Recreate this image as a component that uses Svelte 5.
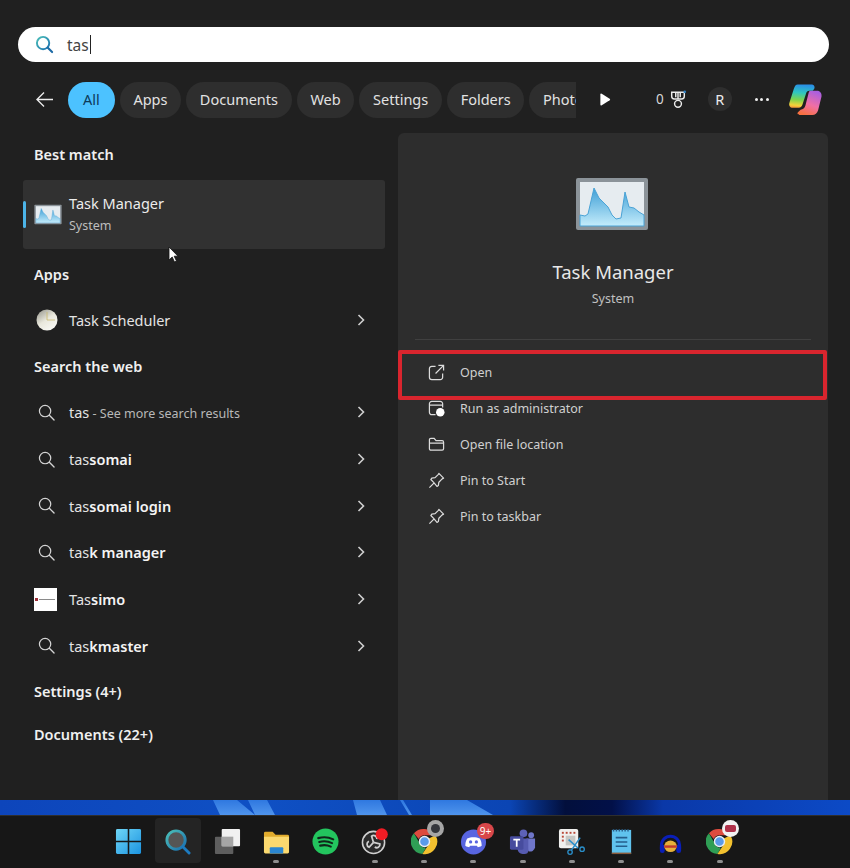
<script>
	const chips = ['All', 'Apps', 'Documents', 'Web', 'Settings', 'Folders', 'Photos'];
	const webRows = [
		{ plain: 'tas', note: ' - See more search results' },
		{ plain: 'tas', bold: 'somai' },
		{ plain: 'tas', bold: 'somai login' },
		{ plain: 'tas', bold: 'k manager' },
		{ plain: 'Tas', bold: 'simo', brand: true },
		{ plain: 'tas', bold: 'kmaster' }
	];
	const actions = ['Open', 'Run as administrator', 'Open file location', 'Pin to Start', 'Pin to taskbar'];
	const chartLine = 'M5 38 L10 39 L13 37 L19 11 L24 21 L28 25 L33 30 L37 38 L41 42 L46 41 L50 15 L54 30 L59 31 L64 35 L69 38 V49 H5 Z';
</script>

{#snippet chart(cls)}
	<svg class={cls} viewBox="0 0 74 54">
		<defs>
			<linearGradient id="chartFill" x1="0" y1="0" x2="0" y2="1">
				<stop offset="0" stop-color="#3f9fd6" />
				<stop offset="1" stop-color="#c4ecfb" />
			</linearGradient>
		</defs>
		<rect x="1" y="1" width="72" height="52" rx="2" fill="#8b9399" />
		<rect x="5" y="5" width="64" height="44" fill="#e6ecf0" />
		<path d={chartLine} fill="url(#chartFill)" stroke="#4aa3d6" stroke-width="1" />
	</svg>
{/snippet}

{#snippet lens()}
	<svg class="lens" viewBox="0 0 18 18">
		<circle cx="7.5" cy="7.5" r="6" fill="none" stroke="#d4d4d4" stroke-width="1.3" />
		<path d="M12 12l5 5" stroke="#d4d4d4" stroke-width="1.4" stroke-linecap="round" />
	</svg>
{/snippet}

{#snippet chevron()}
	<svg class="chevron" viewBox="0 0 8 12">
		<path d="M1.5 1l5 5-5 5" fill="none" stroke="#cfcfcf" stroke-width="1.6" />
	</svg>
{/snippet}

{#snippet chromeIcon()}
	<svg class="tb-icon" viewBox="0 0 28 28">
		<path d="M14 1a13 13 0 0 1 11.3 6.5H14a6.5 6.5 0 0 0-6 4L3 5.5A13 13 0 0 1 14 1z" fill="#dd4b3e" />
		<path d="M3 5.5l5.6 9.8a6.5 6.5 0 0 0 6.9 5.1L11.8 27A13 13 0 0 1 3 5.5z" fill="#2f9e55" />
		<path d="M25.3 7.5A13 13 0 0 1 11.8 27l5.7-8.7a6.5 6.5 0 0 0 1-7.5z" fill="#f3c12f" />
		<circle cx="14" cy="14" r="5.2" fill="#5b9bea" stroke="#e9eef3" stroke-width="1.5" />
	</svg>
{/snippet}

<div class="screen">
	<main class="flyout">
		<div class="search">
			<svg class="search-icon" viewBox="0 0 20 20">
				<defs>
					<linearGradient id="lensRing" x1="0" y1="0" x2="1" y2="1">
						<stop offset="0" stop-color="#4cc0b8" />
						<stop offset="1" stop-color="#1a6fb0" />
					</linearGradient>
				</defs>
				<circle cx="8.5" cy="8.5" r="6.5" fill="none" stroke="url(#lensRing)" stroke-width="2" />
				<path d="M13.5 13.5l4.5 4.5" stroke="#1d6aa5" stroke-width="2.2" stroke-linecap="round" />
			</svg>
			<span class="query">tas</span><span class="caret"></span>
		</div>

		<div class="filters">
			<svg class="back" viewBox="0 0 20 18">
				<path d="M19 9H2M9.5 1.5L2 9l7.500 7.500" fill="none" stroke="#ececec" stroke-width="1.4" />
			</svg>
			<div class="chips">
				{#each chips as chip, i}
					<span class="chip" class:active={i === 0}>{chip}</span>
				{/each}
			</div>
			<svg class="play" viewBox="0 0 12 14"><path d="M1 1.5v11a1 1 0 0 0 1.5.8l8.500-5.500a1 1 0 0 0 0-1.600L2.500.7A1 1 0 0 0 1 1.500z" fill="#fff" /></svg>
			<span class="points">0</span>
			<svg class="trophy" viewBox="0 0 20 20">
				<path d="M3 2h14v4.500a3 3 0 0 1-3 3H6a3 3 0 0 1-3-3zM7.500 2v5.500M12.500 2v5.500M10 2v7.500" fill="none" stroke="#ececec" stroke-width="1.6" />
				<circle cx="10" cy="14.8" r="3.8" fill="none" stroke="#ececec" stroke-width="1.6" />
				<circle cx="17.5" cy="1.5" r="1.5" fill="#2f7fc0" />
			</svg>
			<span class="avatar">R</span>
			<span class="more"><i></i><i></i><i></i></span>
			<svg class="copilot" viewBox="0 0 36 34">
				<defs>
					<linearGradient id="copA" x1="0.4" y1="0" x2="0.3" y2="1">
						<stop offset="0" stop-color="#2a8fe6" />
						<stop offset="0.35" stop-color="#2fc6c0" />
						<stop offset="0.65" stop-color="#7bd44e" />
						<stop offset="0.9" stop-color="#f4d23a" />
						<stop offset="1" stop-color="#f59a3a" />
					</linearGradient>
					<linearGradient id="copB" x1="0.7" y1="0" x2="0.3" y2="1">
						<stop offset="0" stop-color="#a95fe0" />
						<stop offset="0.55" stop-color="#f06fa5" />
						<stop offset="1" stop-color="#f7703f" />
					</linearGradient>
				</defs>
				<path d="M10 1.5H24C27 1.5 28 4 27 6L25.5 8H22C20 8 19 9 18.5 11L15 22C14.5 24 13 25.5 11 25.5H5C2 25.5 .5 23 1.5 20L6 6C7 3 8 1.5 10 1.5Z" fill="url(#copA)" />
				<path d="M23 8H30C33 8 35 10.5 34.5 14L31 28C30 31 28 33 25 33H12C10 33 9 31.5 10.5 30L13 27.5C15.5 27.5 17 26 18 23L21 11C21.5 9 22 8 23 8Z" fill="url(#copB)" />
			</svg>
		</div>

		<div class="columns">
			<section class="results">
				<h2 class="first">Best match</h2>
				<div class="best">
					<span class="marker"></span>
					{@render chart('chart-small')}
					<div class="best-text">
						<div class="name">Task Manager</div>
						<div class="sub">System</div>
					</div>
				</div>

				<h2 class="apps">Apps</h2>
				<div class="row">
					<span class="slot">
						<svg class="clock" viewBox="0 0 22 22">
							<defs>
								<linearGradient id="clockFace" x1="0" y1="0" x2="0.7" y2="1">
									<stop offset="0" stop-color="#8f8f86" />
									<stop offset="0.55" stop-color="#e9e8dc" />
									<stop offset="1" stop-color="#f8f8f4" />
								</linearGradient>
							</defs>
							<circle cx="11" cy="11" r="10.5" fill="url(#clockFace)" />
							<path d="M11 3v8h8" fill="none" stroke="#c9b96d" stroke-width="0.8" />
						</svg>
					</span>
					<span class="label">Task Scheduler</span>
					{@render chevron()}
				</div>

				<h2>Search the web</h2>
				{#each webRows as row}
					<div class="row">
						<span class="slot">
							{#if row.brand}
								<span class="brand"><i></i><b></b></span>
							{:else}
								{@render lens()}
							{/if}
						</span>
						<span class="label">{row.plain}{#if row.bold}<strong>{row.bold}</strong>{/if}{#if row.note}<span class="note">{row.note}</span>{/if}</span>
						{@render chevron()}
					</div>
				{/each}

				<h2>Settings (4+)</h2>
				<h2 class="last">Documents (22+)</h2>
			</section>

			<aside class="detail">
				{@render chart('chart-big')}
				<div class="detail-name">Task Manager</div>
				<div class="detail-sub">System</div>
				<div class="divider"></div>
				<ul class="actions">
					{#each actions as action, i}
						<li>
							<span class="action-icon">
								{#if i === 0}
									<svg viewBox="0 0 18 18"><path d="M8 2.5H4a2.5 2.5 0 0 0-2.5 2.5v9A2.5 2.5 0 0 0 4 16.5h9a2.5 2.5 0 0 0 2.5-2.5v-4M8 10l8-8M11 1.5h5.5V7" fill="none" stroke="#dcdcdc" stroke-width="1.3" /></svg>
								{:else if i === 1}
									<svg viewBox="0 0 18 18"><path d="M8 15.5H4A2.5 2.5 0 0 1 1.5 13V4A2.5 2.5 0 0 1 4 1.5h9A2.5 2.5 0 0 1 15.5 4v4M2 5.5h13" fill="none" stroke="#dcdcdc" stroke-width="1.3" /><circle cx="13" cy="13" r="4.5" fill="#fff" /></svg>
								{:else if i === 2}
									<svg viewBox="0 0 18 18"><path d="M1.5 13.5V4A1.5 1.5 0 0 1 3 2.5h3.5L8.5 5H15A1.5 1.5 0 0 1 16.5 6.5v7A1.5 1.5 0 0 1 15 15H3a1.5 1.5 0 0 1-1.5-1.5zM1.5 7.5H16.5" fill="none" stroke="#dcdcdc" stroke-width="1.3" /></svg>
								{:else}
									<svg viewBox="0 0 18 18"><path d="M11.5 1.5l5 5-1.5.8-3.5 3.5-.5 3.5-1.5 1L6 11 3 8l1-1.5 3.5-.5L11 2.5zM6.5 11.5L1.5 16.5" fill="none" stroke="#dcdcdc" stroke-width="1.3" stroke-linejoin="round" /></svg>
								{/if}
							</span>
							{action}
							{#if i === 0}<span class="callout"></span>{/if}
						</li>
					{/each}
				</ul>
			</aside>
		</div>

		<svg class="pointer" viewBox="0 0 12 18">
			<path d="M1 1v13l3.2-3 2.3 5 2-.9-2.300-4.900H10z" fill="#fff" stroke="#111" stroke-width="0.8" />
		</svg>
	</main>

	<svg class="wallpaper" viewBox="0 0 850 15" preserveAspectRatio="none">
		<defs>
			<linearGradient id="wall" x1="0" y1="0" x2="1" y2="0">
				<stop offset="0" stop-color="#0d45bb" />
				<stop offset="0.3" stop-color="#0f50c4" />
				<stop offset="0.6" stop-color="#0b45b4" />
				<stop offset="0.665" stop-color="#020f3c" />
				<stop offset="0.72" stop-color="#021048" />
				<stop offset="0.78" stop-color="#0a38a8" />
				<stop offset="1" stop-color="#0c4ac6" />
			</linearGradient>
			<linearGradient id="swoosh" x1="0" y1="0" x2="0" y2="1">
				<stop offset="0" stop-color="#2f78e0" />
				<stop offset="1" stop-color="#4f94ec" />
			</linearGradient>
		</defs>
		<rect width="850" height="15" fill="url(#wall)" />
		<path d="M213 0h24l18 15h-35zM248 0h19l8 15h-20zM353 0h27l7 15h-30zM400 0h3l9 15h-3zM430 0h37l26 15h-63z" fill="url(#swoosh)" />
	</svg>

	<footer class="taskbar">
		<div class="tb-item">
			<svg class="tb-icon" viewBox="0 0 28 28">
				<defs>
					<linearGradient id="win" x1="0" y1="0" x2="1" y2="1">
						<stop offset="0" stop-color="#6fd6f7" />
						<stop offset="1" stop-color="#1b93e0" />
					</linearGradient>
				</defs>
				<path d="M1 2.5A1.5 1.5 0 0 1 2.5 1h10.7v12.2H1zM14.8 1h10.7A1.5 1.5 0 0 1 27 2.5v10.7H14.8zM1 14.8h12.2V27H2.5A1.5 1.5 0 0 1 1 25.5zM14.8 14.8H27v10.7a1.5 1.5 0 0 1-1.5 1.5H14.8z" fill="url(#win)" />
			</svg>
		</div>
		<div class="tb-item current">
			<svg class="tb-icon" viewBox="0 0 28 28">
				<circle cx="12.5" cy="12.5" r="9.5" fill="#555" stroke="url(#lensRing)" stroke-width="3" />
				<path d="M19.5 19.5l6.5 6.5" stroke="#1d7bc0" stroke-width="3" stroke-linecap="round" />
			</svg>
		</div>
		<div class="tb-item">
			<svg class="tb-icon" viewBox="0 0 28 28">
				<rect x="1" y="9" width="19" height="18" rx="1" fill="#5e5e5e" />
				<rect x="8" y="1" width="19" height="18" rx="1" fill="#f1f1f1" />
				<rect x="8" y="9" width="12" height="10" fill="#a6a6a6" />
			</svg>
		</div>
		<div class="tb-item on">
			<svg class="tb-icon" viewBox="0 0 28 28">
				<path d="M1 5.5A1.5 1.5 0 0 1 2.5 4H10l3 3h12.5A1.5 1.5 0 0 1 27 8.5V12H1z" fill="#e2ac2d" />
				<path d="M1 9h26v16a1.5 1.5 0 0 1-1.5 1.5h-23A1.5 1.5 0 0 1 1 25z" fill="#fbd96f" />
				<rect x="7" y="20" width="14" height="6.5" rx="1" fill="#2a86d1" />
			</svg>
		</div>
		<div class="tb-item">
			<svg class="tb-icon" viewBox="0 0 28 28">
				<circle cx="14" cy="14" r="13.5" fill="#23c55e" />
				<path d="M6.5 10.5c5-1.5 11-1 15.5 1.3M7.5 14.5c4.5-1.2 9.5-.7 13.3 1.2M8.5 18.3c3.8-1 7.800-.6 11 1" fill="none" stroke="#10261a" stroke-width="2.2" stroke-linecap="round" />
			</svg>
		</div>
		<div class="tb-item on">
			<svg class="tb-icon" viewBox="0 0 28 28">
				<circle cx="13" cy="15" r="11.5" fill="#2a2a2a" stroke="#cfcfcf" stroke-width="1.6" />
				<g fill="none" stroke="#cfcfcf" stroke-width="1.8">
					<path d="M13 15L11 8.5a3.400 3.400 0 0 1 5.500 3" />
					<path d="M13 15L11 8.5a3.400 3.400 0 0 1 5.500 3" transform="rotate(120 13 15)" />
					<path d="M13 15L11 8.5a3.400 3.400 0 0 1 5.500 3" transform="rotate(240 13 15)" />
				</g>
				<circle cx="21.5" cy="6.5" r="6.3" fill="#f01c24" />
			</svg>
		</div>
		<div class="tb-item on">
			{@render chromeIcon()}
			<span class="profile grey"><i></i></span>
		</div>
		<div class="tb-item on">
			<svg class="tb-icon" viewBox="0 0 28 28">
				<circle cx="14" cy="14.5" r="13" fill="#5865e0" />
				<path d="M7.5 11c4-2 9-2 13 0 1.5 2.5 2 5 2 7.5-1.5 1-3 1.5-4 1.5l-1-1.7h-7l-1 1.7c-1 0-2.5-.5-4-1.5 0-2.5.5-5 2-7.5z" fill="#fff" />
				<circle cx="11" cy="14.5" r="1.7" fill="#5865e0" /><circle cx="17" cy="14.5" r="1.7" fill="#5865e0" />
			</svg>
			<span class="count">9+</span>
		</div>
		<div class="tb-item on">
			<svg class="tb-icon" viewBox="0 0 28 28">
				<circle cx="15" cy="5.5" r="4" fill="#5d62b8" /><circle cx="23" cy="7.5" r="3" fill="#6f76c9" />
				<path d="M18 11h9v9a5 5 0 0 1-7 4z" fill="#6f76c9" />
				<path d="M9 11h11v12a4 4 0 0 1-4 4h-2a5 5 0 0 1-5-5z" fill="#565bb0" />
				<rect x="1" y="8.5" width="14" height="14" rx="1.5" fill="#474c9e" />
				<path d="M4.5 12h7M8 12v7.5" stroke="#fff" stroke-width="1.8" />
			</svg>
		</div>
		<div class="tb-item on">
			<svg class="tb-icon" viewBox="0 0 28 28">
				<rect x="1" y="1" width="20" height="20" rx="2" fill="#f0f0ee" />
				<g fill="#b84a3a"><rect x="4" y="4" width="2" height="2" /><rect x="8" y="4" width="2" height="2" /><rect x="12" y="4" width="2" height="2" /><rect x="16" y="4" width="2" height="2" /><rect x="4" y="8" width="2" height="2" /><rect x="4" y="12" width="2" height="2" /></g>
				<rect x="8" y="8" width="10" height="10" fill="#c6c6c2" />
				<path d="M11 12l10 9M23 10l-9 13" stroke="#2a8ec9" stroke-width="1.6" />
				<circle cx="25" cy="22" r="2.3" fill="none" stroke="#2a8ec9" stroke-width="1.4" />
				<circle cx="12.5" cy="25" r="2.3" fill="none" stroke="#2a8ec9" stroke-width="1.4" />
			</svg>
		</div>
		<div class="tb-item on">
			<svg class="tb-icon" viewBox="0 0 28 28">
				<rect x="4" y="2" width="20" height="25" fill="#60c3ee" />
				<rect x="4" y="25.5" width="20" height="1.5" fill="#8a5a3a" />
				<path d="M5 2.5h18" stroke="#2a5f8a" stroke-width="2.5" stroke-dasharray="1.5 1.5" />
				<path d="M8 10h12M8 14.5h12M8 19h12" stroke="#245f8c" stroke-width="1.6" />
			</svg>
		</div>
		<div class="tb-item on">
			<svg class="tb-icon" viewBox="0 0 28 28">
				<path d="M3 18a11 11 0 0 1 22 0v4h-3v-4a8 8 0 0 0-16 0v4H3z" fill="#0a1fb8" />
				<rect x="3" y="17" width="5" height="9" rx="2.5" fill="#0a1fb8" /><rect x="20" y="17" width="5" height="9" rx="2.5" fill="#0a1fb8" />
				<ellipse cx="14" cy="19" rx="6.5" ry="6" fill="#e6b03a" />
				<rect x="7.5" y="18" width="13" height="2.5" fill="#c23a2a" />
			</svg>
		</div>
		<div class="tb-item on">
			{@render chromeIcon()}
			<span class="profile"><i></i></span>
		</div>
	</footer>
</div>

<style>
	:global(body) {
		background: #202020;
	}

	.screen {
		width: 850px;
		height: 868px;
		display: flex;
		flex-direction: column;
		overflow: hidden;
		font-family: 'Noto Sans', 'Open Sans', sans-serif;
		color: #ececec;
	}

	.flyout {
		position: relative;
		height: 800px;
		flex: none;
		padding: 27px 21px 0 18px;
		box-sizing: border-box;
		background: #202020;
	}

	.search {
		height: 35px;
		background: #fff;
		border-radius: 18px;
		display: flex;
		align-items: center;
		padding-left: 17px;
	}

	.search-icon {
		width: 19px;
		height: 19px;
		margin-right: 13px;
	}

	.query {
		font-size: 15.5px;
		color: #444;
	}

	.caret {
		width: 1px;
		height: 19px;
		margin-left: 1px;
		background: #222;
	}

	.filters {
		height: 36px;
		margin-top: 20px;
		padding-bottom: 2px;
		box-sizing: border-box;
		display: flex;
		align-items: center;
	}

	.back {
		width: 19px;
		height: 17px;
		margin-left: 17px;
		margin-right: 14px;
	}

	.chips {
		width: 508px;
		flex: none;
		align-self: flex-start;
		display: flex;
		gap: 5px;
		overflow: hidden;
	}

	.chip {
		flex: none;
		height: 36px;
		line-height: 34px;
		padding: 0 13.7px;
		border-radius: 18px;
		background: #2e2e2e;
		font-size: 14.5px;
		color: #e2e2e2;
	}

	.chip.active {
		padding: 0 15px;
		background: #4cc2ff;
		color: #0c3a5a;
	}

	.play {
		width: 12px;
		height: 13px;
		margin-left: 23px;
	}

	.points {
		margin-left: 45px;
		font-size: 13.5px;
		color: #d8d8d8;
	}

	.trophy {
		width: 18px;
		height: 19px;
		margin-left: 5px;
	}

	.avatar {
		width: 24px;
		height: 24px;
		margin-left: 21px;
		border-radius: 50%;
		background: #2e2e2e;
		text-align: center;
		line-height: 24px;
		font-size: 14.5px;
	}

	.more {
		margin-left: 23px;
		display: flex;
		gap: 2.5px;
	}

	.more i {
		width: 3px;
		height: 3px;
		border-radius: 50%;
		background: #f0f0f0;
	}

	.copilot {
		width: 35px;
		height: 33px;
		margin-left: 19px;
	}

	.columns {
		margin: 15px -21px 0 -18px;
		display: grid;
		grid-template-columns: 398px 430px;
	}

	.results {
		padding: 0 0 0 34px;
	}

	h2 {
		height: 24px;
		line-height: 22px;
		margin: 11px 0 10.5px;
		font-size: 14.5px;
		font-weight: 600;
		color: #f0f0f0;
	}

	h2.first {
		margin: 10px 0 13px;
	}

	h2.apps {
		margin: 14px 0 10px;
	}

	h2.last {
		margin-top: 19px;
	}

	.best {
		position: relative;
		width: 362px;
		height: 69px;
		margin-left: -11px;
		box-sizing: border-box;
		padding-left: 11px;
		display: flex;
		align-items: center;
		gap: 7px;
		background: #313131;
		border-radius: 3px;
	}

	.marker {
		position: absolute;
		left: 0;
		top: 21px;
		width: 3px;
		height: 27px;
		background: #4cb4e8;
		border-radius: 2px;
	}

	.chart-small {
		width: 28px;
		height: 21px;
	}

	.best-text {
		margin-top: -2px;
	}

	.name {
		font-size: 14.5px;
		color: #ececec;
	}

	.sub {
		margin-top: 4px;
		font-size: 12.5px;
		color: #bdbdbd;
	}

	.row {
		height: 46.67px;
		display: flex;
		align-items: center;
		padding-right: 33px;
		font-size: 14.5px;
	}

	.slot {
		width: 35px;
		flex: none;
		display: flex;
		align-items: center;
	}

	.lens {
		width: 17px;
		height: 17px;
		margin-left: 4px;
	}

	.clock {
		width: 22px;
		height: 22px;
		margin-left: 2px;
	}

	.brand {
		position: relative;
		width: 23px;
		height: 23px;
		background: #fff;
		display: block;
	}

	.brand i {
		position: absolute;
		left: 1px;
		top: 10px;
		width: 3px;
		height: 3px;
		background: #a0303a;
	}

	.brand b {
		position: absolute;
		left: 5px;
		top: 11px;
		width: 16px;
		height: 1px;
		background: #8a8a8a;
	}

	.label {
		flex: 1;
		color: #e4e4e4;
	}

	.label strong {
		font-weight: 600;
		color: #f4f4f4;
	}

	.note {
		font-size: 12.5px;
		color: #b8b8b8;
	}

	.chevron {
		width: 8px;
		height: 12px;
	}

	.detail {
		height: 667px;
		background: #2d2d2d;
		border-radius: 6px 6px 0 0;
		display: flex;
		flex-direction: column;
		align-items: center;
	}

	.chart-big {
		width: 74px;
		height: 54px;
		margin-top: 44px;
		margin-left: -2px;
	}

	.detail-name {
		margin-top: 28px;
		font-size: 18.5px;
		line-height: 26px;
		color: #e8e8e8;
	}

	.detail-sub {
		margin-top: 5px;
		font-size: 12.5px;
		line-height: 18px;
		color: #c0c0c0;
	}

	.divider {
		width: 396px;
		height: 1px;
		margin-top: 31px;
		background: #404040;
	}

	.actions {
		width: 100%;
		margin: 14px 0 0;
		padding: 0;
		list-style: none;
	}

	.actions li {
		position: relative;
		height: 36px;
		display: flex;
		align-items: center;
		padding-left: 30px;
		font-size: 12.5px;
		color: #d0d0d0;
	}

	.action-icon {
		width: 32px;
		display: flex;
	}

	.action-icon svg {
		width: 17px;
		height: 17px;
	}

	.callout {
		position: absolute;
		left: 0;
		top: -4px;
		width: 429px;
		height: 50px;
		box-sizing: border-box;
		border: 4px solid #d9252e;
		border-radius: 2px;
	}

	.pointer {
		position: absolute;
		left: 168px;
		top: 246px;
		width: 12px;
		height: 18px;
	}

	.wallpaper {
		display: block;
		flex: none;
		width: 850px;
		height: 15px;
	}

	.taskbar {
		flex: 1;
		background: #171717;
		border-top: 1px solid #2e2e2e;
		display: flex;
		padding-left: 104px;
	}

	.tb-item {
		position: relative;
		width: 49.25px;
		flex: none;
		display: flex;
		justify-content: center;
		padding-top: 12px;
		box-sizing: border-box;
	}

	.tb-item.current::before {
		content: '';
		position: absolute;
		left: 2px;
		right: 2px;
		top: 2px;
		bottom: 5px;
		background: #242424;
		border-radius: 4px;
	}

	.tb-item.on::after {
		content: '';
		position: absolute;
		left: 21.5px;
		bottom: 5px;
		width: 6px;
		height: 3px;
		border-radius: 2px;
		background: #8e8e8e;
	}

	.tb-icon {
		position: relative;
		width: 27px;
		height: 27px;
		align-self: flex-start;
	}

	.profile {
		position: absolute;
		right: 5px;
		top: 4px;
		width: 17px;
		height: 17px;
		border-radius: 50%;
		background: #f2f2f2;
	}

	.profile i {
		position: absolute;
		left: 3px;
		top: 5px;
		width: 11px;
		height: 7px;
		background: #b0314a;
		border-radius: 2px;
	}

	.profile.grey {
		background: #a6a6a6;
	}

	.profile.grey i {
		left: 4px;
		top: 4px;
		width: 9px;
		height: 9px;
		border-radius: 50%;
		background: #34363c;
	}

	.count {
		position: absolute;
		right: 4px;
		top: 7px;
		width: 17px;
		height: 16px;
		border-radius: 8px;
		background: #d8474a;
		color: #fff;
		font-size: 10px;
		line-height: 16px;
		text-align: center;
	}
</style>
